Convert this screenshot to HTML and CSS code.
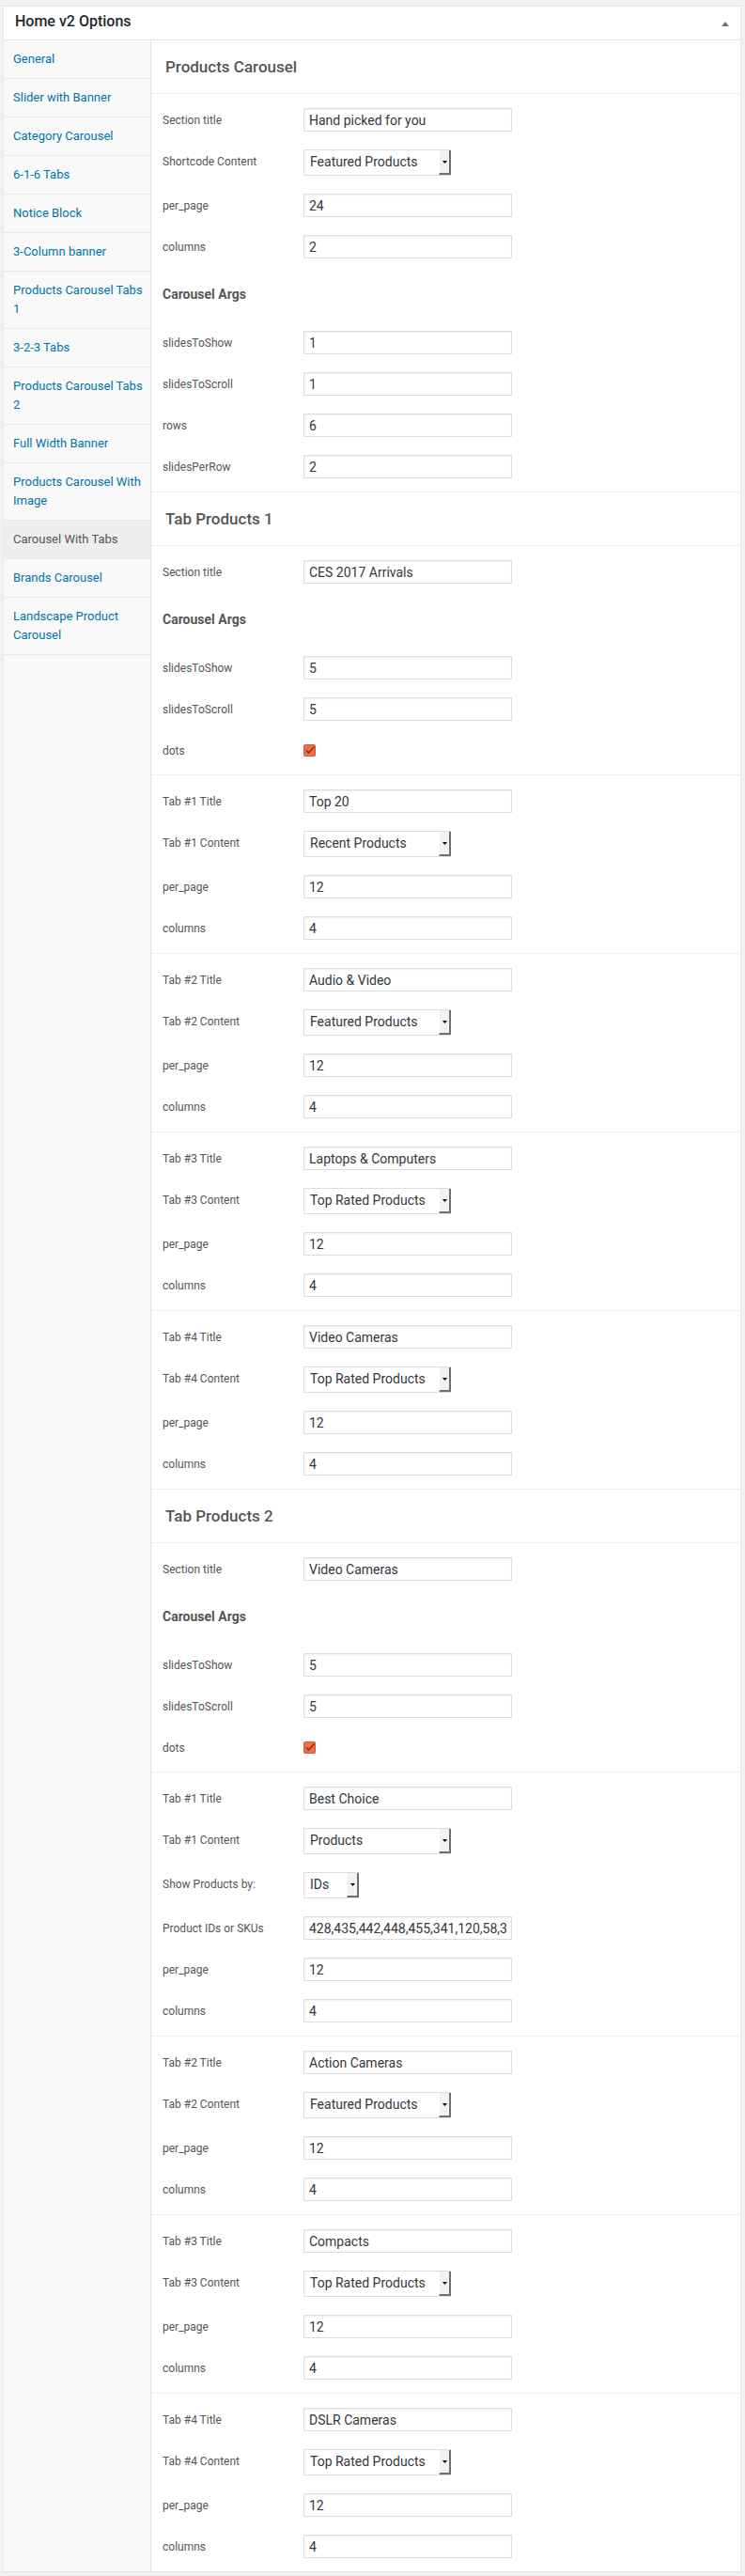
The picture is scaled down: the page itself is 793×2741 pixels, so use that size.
FILE: index.html
```html
<!DOCTYPE html>
<html lang="en">
<head>
<meta charset="utf-8">
<title>Home v2 Options</title>
<link rel="stylesheet" href="styles.css">
</head>
<body>
<div class="panel">
  <div class="panel-head">
    <h2 class="panel-title">Home v2 Options</h2>
    <svg class="toggle" width="8" height="5" viewBox="0 0 8 5"><path d="M4 0 L8 5 L0 5 Z" fill="#72777c"/></svg>
  </div>
  <div class="panel-body">
    <ul class="sidebar">
      <li class="nav-item">General</li>
      <li class="nav-item">Slider with Banner</li>
      <li class="nav-item">Category Carousel</li>
      <li class="nav-item">6-1-6 Tabs</li>
      <li class="nav-item">Notice Block</li>
      <li class="nav-item">3-Column banner</li>
      <li class="nav-item">Products Carousel Tabs 1</li>
      <li class="nav-item">3-2-3 Tabs</li>
      <li class="nav-item">Products Carousel Tabs 2</li>
      <li class="nav-item">Full Width Banner</li>
      <li class="nav-item">Products Carousel With Image</li>
      <li class="nav-item active">Carousel With Tabs</li>
      <li class="nav-item">Brands Carousel</li>
      <li class="nav-item">Landscape Product Carousel</li>
    </ul>

    <div class="main">
      <h3 class="sec-head">Products Carousel</h3>
      <div class="group">
        <div class="row"><label class="lbl">Section title</label><input class="txt" type="text" value="Hand picked for you"></div>
        <div class="row"><label class="lbl">Shortcode Content</label><div class="select"><span class="sv">Featured Products</span><span class="sb"><svg width="5" height="3" viewBox="0 0 5 3"><path d="M0 0 H5 L2.5 3 Z" fill="#000"/></svg></span></div></div>
        <div class="row"><label class="lbl">per_page</label><input class="txt" type="text" value="24"></div>
        <div class="row"><label class="lbl">columns</label><input class="txt" type="text" value="2"></div>
        <div class="args">Carousel Args</div>
        <div class="row"><label class="lbl">slidesToShow</label><input class="txt" type="text" value="1"></div>
        <div class="row"><label class="lbl">slidesToScroll</label><input class="txt" type="text" value="1"></div>
        <div class="row"><label class="lbl">rows</label><input class="txt" type="text" value="6"></div>
        <div class="row"><label class="lbl">slidesPerRow</label><input class="txt" type="text" value="2"></div>
      </div>

      <h3 class="sec-head">Tab Products 1</h3>
      <div class="group">
        <div class="row"><label class="lbl">Section title</label><input class="txt" type="text" value="CES 2017 Arrivals"></div>
        <div class="args">Carousel Args</div>
        <div class="row"><label class="lbl">slidesToShow</label><input class="txt" type="text" value="5"></div>
        <div class="row"><label class="lbl">slidesToScroll</label><input class="txt" type="text" value="5"></div>
        <div class="row row-check"><label class="lbl">dots</label><span class="cb-wrap"><svg class="cb" width="13" height="13" viewBox="0 0 13 13"><rect x="0.5" y="0.5" width="12" height="12" rx="1" fill="#ec6f48" stroke="#cf5a38"/><path d="M3 6.5 L5.5 9 L11.5 2.5" fill="none" stroke="#8e3219" stroke-width="1.6"/></svg></span></div>
      </div>
      <div class="group">
        <div class="row"><label class="lbl">Tab #1 Title</label><input class="txt" type="text" value="Top 20"></div>
        <div class="row"><label class="lbl">Tab #1 Content</label><div class="select"><span class="sv">Recent Products</span><span class="sb"><svg width="5" height="3" viewBox="0 0 5 3"><path d="M0 0 H5 L2.5 3 Z" fill="#000"/></svg></span></div></div>
        <div class="row"><label class="lbl">per_page</label><input class="txt" type="text" value="12"></div>
        <div class="row"><label class="lbl">columns</label><input class="txt" type="text" value="4"></div>
      </div>
      <div class="group">
        <div class="row"><label class="lbl">Tab #2 Title</label><input class="txt" type="text" value="Audio &amp; Video"></div>
        <div class="row"><label class="lbl">Tab #2 Content</label><div class="select"><span class="sv">Featured Products</span><span class="sb"><svg width="5" height="3" viewBox="0 0 5 3"><path d="M0 0 H5 L2.5 3 Z" fill="#000"/></svg></span></div></div>
        <div class="row"><label class="lbl">per_page</label><input class="txt" type="text" value="12"></div>
        <div class="row"><label class="lbl">columns</label><input class="txt" type="text" value="4"></div>
      </div>
      <div class="group">
        <div class="row"><label class="lbl">Tab #3 Title</label><input class="txt" type="text" value="Laptops &amp; Computers"></div>
        <div class="row"><label class="lbl">Tab #3 Content</label><div class="select"><span class="sv">Top Rated Products</span><span class="sb"><svg width="5" height="3" viewBox="0 0 5 3"><path d="M0 0 H5 L2.5 3 Z" fill="#000"/></svg></span></div></div>
        <div class="row"><label class="lbl">per_page</label><input class="txt" type="text" value="12"></div>
        <div class="row"><label class="lbl">columns</label><input class="txt" type="text" value="4"></div>
      </div>
      <div class="group">
        <div class="row"><label class="lbl">Tab #4 Title</label><input class="txt" type="text" value="Video Cameras"></div>
        <div class="row"><label class="lbl">Tab #4 Content</label><div class="select"><span class="sv">Top Rated Products</span><span class="sb"><svg width="5" height="3" viewBox="0 0 5 3"><path d="M0 0 H5 L2.5 3 Z" fill="#000"/></svg></span></div></div>
        <div class="row"><label class="lbl">per_page</label><input class="txt" type="text" value="12"></div>
        <div class="row"><label class="lbl">columns</label><input class="txt" type="text" value="4"></div>
      </div>

      <h3 class="sec-head">Tab Products 2</h3>
      <div class="group">
        <div class="row"><label class="lbl">Section title</label><input class="txt" type="text" value="Video Cameras"></div>
        <div class="args">Carousel Args</div>
        <div class="row"><label class="lbl">slidesToShow</label><input class="txt" type="text" value="5"></div>
        <div class="row"><label class="lbl">slidesToScroll</label><input class="txt" type="text" value="5"></div>
        <div class="row row-check"><label class="lbl">dots</label><span class="cb-wrap"><svg class="cb" width="13" height="13" viewBox="0 0 13 13"><rect x="0.5" y="0.5" width="12" height="12" rx="1" fill="#ec6f48" stroke="#cf5a38"/><path d="M3 6.5 L5.5 9 L11.5 2.5" fill="none" stroke="#8e3219" stroke-width="1.6"/></svg></span></div>
      </div>
      <div class="group">
        <div class="row"><label class="lbl">Tab #1 Title</label><input class="txt" type="text" value="Best Choice"></div>
        <div class="row"><label class="lbl">Tab #1 Content</label><div class="select"><span class="sv">Products</span><span class="sb"><svg width="5" height="3" viewBox="0 0 5 3"><path d="M0 0 H5 L2.5 3 Z" fill="#000"/></svg></span></div></div>
        <div class="row"><label class="lbl">Show Products by:</label><div class="select narrow"><span class="sv">IDs</span><span class="sb"><svg width="5" height="3" viewBox="0 0 5 3"><path d="M0 0 H5 L2.5 3 Z" fill="#000"/></svg></span></div></div>
        <div class="row"><label class="lbl">Product IDs or SKUs</label><input class="txt" type="text" value="428,435,442,448,455,341,120,58,32,39,46"></div>
        <div class="row"><label class="lbl">per_page</label><input class="txt" type="text" value="12"></div>
        <div class="row"><label class="lbl">columns</label><input class="txt" type="text" value="4"></div>
      </div>
      <div class="group">
        <div class="row"><label class="lbl">Tab #2 Title</label><input class="txt" type="text" value="Action Cameras"></div>
        <div class="row"><label class="lbl">Tab #2 Content</label><div class="select"><span class="sv">Featured Products</span><span class="sb"><svg width="5" height="3" viewBox="0 0 5 3"><path d="M0 0 H5 L2.5 3 Z" fill="#000"/></svg></span></div></div>
        <div class="row"><label class="lbl">per_page</label><input class="txt" type="text" value="12"></div>
        <div class="row"><label class="lbl">columns</label><input class="txt" type="text" value="4"></div>
      </div>
      <div class="group">
        <div class="row"><label class="lbl">Tab #3 Title</label><input class="txt" type="text" value="Compacts"></div>
        <div class="row"><label class="lbl">Tab #3 Content</label><div class="select"><span class="sv">Top Rated Products</span><span class="sb"><svg width="5" height="3" viewBox="0 0 5 3"><path d="M0 0 H5 L2.5 3 Z" fill="#000"/></svg></span></div></div>
        <div class="row"><label class="lbl">per_page</label><input class="txt" type="text" value="12"></div>
        <div class="row"><label class="lbl">columns</label><input class="txt" type="text" value="4"></div>
      </div>
      <div class="group">
        <div class="row"><label class="lbl">Tab #4 Title</label><input class="txt" type="text" value="DSLR Cameras"></div>
        <div class="row"><label class="lbl">Tab #4 Content</label><div class="select"><span class="sv">Top Rated Products</span><span class="sb"><svg width="5" height="3" viewBox="0 0 5 3"><path d="M0 0 H5 L2.5 3 Z" fill="#000"/></svg></span></div></div>
        <div class="row"><label class="lbl">per_page</label><input class="txt" type="text" value="12"></div>
        <div class="row"><label class="lbl">columns</label><input class="txt" type="text" value="4"></div>
      </div>
    </div>
  </div>
</div>
</body>
</html>
```
FILE: styles.css
```css
* { box-sizing: border-box; }

html, body { margin: 0; padding: 0; }

body {
  background: #f1f1f1;
  font-family: Roboto, "Noto Sans", "Liberation Sans", sans-serif;
  padding: 6px 4px 4px 3px;
  color: #555;
}

.panel {
  background: #fff;
  border: 1px solid #e5e5e5;
}

.panel-head {
  display: flex;
  align-items: flex-start;
  justify-content: space-between;
  padding: 6px 12px 9px 12px;
  border-bottom: 1px solid #e5e5e5;
}

.panel-title {
  margin: 0;
  font-size: 16px;
  line-height: 20px;
  font-weight: 500;
  color: #23282d;
}

.toggle {
  display: block;
  margin-top: 10px;
}

.panel-body {
  display: flex;
  align-items: stretch;
}

.sidebar {
  flex: 0 0 157px;
  margin: 0;
  padding: 0;
  list-style: none;
  background: #f9f9f9;
  border-right: 1px solid #e5e5e5;
}

.nav-item {
  padding: 10px 6px 10px 10px;
  font-size: 13px;
  line-height: 20px;
  color: #0073aa;
  border-bottom: 1px solid #e8e8e8;
}

.nav-item.active {
  background: #eee;
  color: #555;
}

.main {
  flex: 1;
  min-width: 0;
}

.sec-head {
  margin: 0;
  padding: 16px 15px;
  font-size: 17px;
  line-height: 24px;
  font-weight: 500;
  color: #555;
  border-bottom: 1px solid #eee;
}

.group {
  padding: 5px 0;
  border-bottom: 1px solid #eee;
}

.group:last-child {
  border-bottom: 0;
}

.row {
  display: flex;
  align-items: flex-start;
  padding: 10px 0 9px 12px;
}

.row-check {
  padding-bottom: 8px;
}

.lbl {
  flex: 0 0 150px;
  padding-top: 3px;
  font-size: 12px;
  line-height: 20px;
  color: #555;
}

.txt {
  display: block;
  width: 222px;
  height: 25px;
  margin: 0;
  padding: 0 5px;
  border: 1px solid #ddd;
  border-radius: 0;
  box-shadow: inset 0 1px 2px rgba(0, 0, 0, 0.07);
  background: #fff;
  font-family: Roboto, "Noto Sans", sans-serif;
  font-size: 14px;
  color: #32373c;
  outline: none;
}

.select {
  display: flex;
  width: 157px;
  height: 28px;
  border: 1px solid #ddd;
  border-right: 0;
  background: #fff;
}

.select.narrow {
  width: 59px;
}

.sv {
  flex: 1;
  padding-left: 6px;
  font-size: 14px;
  line-height: 24px;
  color: #32373c;
  white-space: nowrap;
  overflow: hidden;
}

.sb {
  flex: 0 0 13px;
  display: flex;
  align-items: center;
  justify-content: center;
  background: #f2f2f2;
  border-left: 1px solid #fff;
  border-right: 2px solid #707070;
  border-bottom: 2px solid #707070;
}

.sb svg {
  display: block;
}

.args {
  padding: 19px 12px;
  font-size: 14px;
  line-height: 20px;
  font-weight: 700;
  color: #555;
}

.cb-wrap {
  display: flex;
  align-items: center;
  height: 25px;
}

.cb {
  display: block;
}
```
